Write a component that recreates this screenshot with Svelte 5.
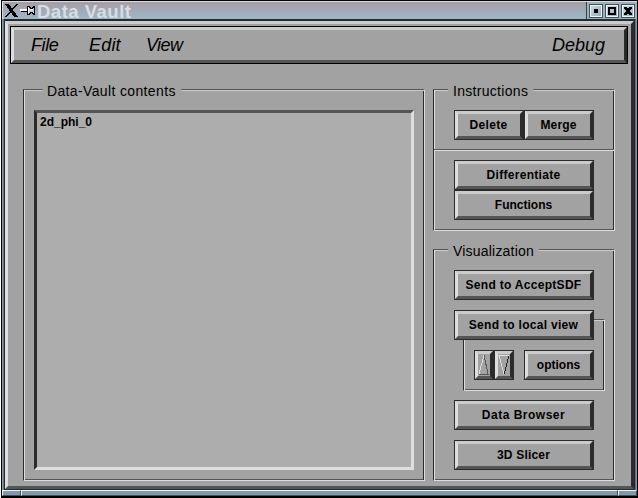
<script>
  const menus = ['File', 'Edit', 'View'];
  const windowButtons = ['iconify', 'maximize', 'close'];
</script>

{#snippet push(label, spacing = 0.3)}
  <button><span class="face" style="letter-spacing: {spacing}px">{label}</span></button>
{/snippet}

<div class="window">
  <header>
    <svg class="logo" width="33" height="15" viewBox="0 0 33 15" shape-rendering="crispEdges">
      <path d="M0 0h4l9 13h-4z" fill="#000" />
      <path d="M12.500 0L0.500 13" stroke="#000" stroke-width="1.3" />
      <path d="M15 5h8v2h-8z" fill="#fff" />
      <path d="M16 7h7v1h-7z" fill="#000" />
      <path d="M22.500 2.500h2l1 2h2l1-2h1v8h-1l-1-2h-2l-1 2h-2z" fill="#ccd3d8" stroke="#000" />
      <path d="M23 3h1v5h-1zM25 5h3v1h-3z" fill="#fff" />
    </svg>
    <h1>Data Vault</h1>
    <div class="controls">
      {#each windowButtons as kind}
        <div class="control">
          <svg width="10" height="10" viewBox="0 0 10 10" shape-rendering="crispEdges">
            {#if kind === 'iconify'}
              <path d="M3 3h4v4h-4z" />
            {:else if kind === 'maximize'}
              <path fill-rule="evenodd" d="M1 1h8v8h-8zM3 3v4h4v-4z" />
            {:else}
              <path d="M1 1h3v1h2v-1h3v2h-1v1h-1v2h1v1h1v2h-3v-1h-2v1h-3v-2h1v-1h1v-2h-1v-1h-1z" />
            {/if}
          </svg>
        </div>
      {/each}
    </div>
  </header>

  <main>
    <nav>
      <div class="menubar">
        {#each menus as menu}
          <span class={menu.toLowerCase()}>{menu}</span>
        {/each}
        <span class="debug">Debug</span>
      </div>
    </nav>

    <div class="columns">
      <section class="group contents">
        <h2>Data-Vault contents</h2>
        <div class="list">2d_phi_0</div>
      </section>

      <div class="side">
        <section class="group instructions">
          <h2>Instructions</h2>
          <div class="pair">
            {@render push('Delete')}
            {@render push('Merge', 0.15)}
          </div>
          <hr />
          <div class="stack">
            {@render push('Differentiate')}
            {@render push('Functions', 0)}
          </div>
        </section>

        <section class="group visualization">
          <h2>Visualization</h2>
          {@render push('Send to AcceptSDF')}
          <div class="local">
            {@render push('Send to local view')}
            <div class="group options">
              <button class="arrow" aria-label="Previous">
                <span class="face">
                  <svg width="12" height="22" viewBox="0 0 12 22" shape-rendering="crispEdges">
                    <path d="M6 1L10 20H1" fill="none" stroke="#555" />
                    <path d="M1 20L6 1" stroke="#ddd" />
                  </svg>
                </span>
              </button>
              <button class="arrow" aria-label="Next">
                <span class="face">
                  <svg width="12" height="22" viewBox="0 0 12 22" shape-rendering="crispEdges">
                    <path d="M11 1.500L6 20.500" stroke="#222" />
                    <path d="M11 1.500H1L6 20" fill="none" stroke="#ddd" />
                  </svg>
                </span>
              </button>
              {@render push('options', 0)}
            </div>
          </div>
          {@render push('Data Browser', 0.5)}
          {@render push('3D Slicer', 0.2)}
        </section>
      </div>
    </div>
  </main>

  <footer><i></i><b></b><i></i></footer>
</div>

<style>
  :global(body) {
    background: #fff;
  }
  * {
    box-sizing: border-box;
  }
  .window {
    width: 637px;
    height: 498px;
    margin-left: 1px;
    border: 1px solid #000;
    border-bottom-width: 2px;
    background: #8299a9;
    color: #000;
    font-family: "Liberation Sans", Arial, sans-serif;
    display: flex;
    flex-direction: column;
    overflow: hidden;
  }
  header {
    height: 18px;
    flex: none;
    border-top: 1px solid #d8dde2;
    border-left: 1px solid #d8dde2;
    background: linear-gradient(#a79da6, #9db7c7);
    display: flex;
  }
  .logo {
    margin: 2px 0 0 2px;
    flex: none;
  }
  h1 {
    margin: 0 0 0 -1px;
    font-size: 18.500px;
    line-height: 20px;
    letter-spacing: 0.500px;
    color: #d9dde1;
    white-space: nowrap;
  }
  .controls {
    margin-left: auto;
    width: 51px;
    border-left: 1px solid #34424a;
    background: #9db1bd;
    display: flex;
    gap: 2px;
    padding: 2px 0 0 2px;
  }
  .control {
    width: 14px;
    height: 14px;
    border: 1px solid #415059;
    box-shadow: inset 1px 1px #edf4f7, inset -1px -1px #edf4f7;
    background: linear-gradient(135deg, #d0dde4, #8fa9b8);
    padding: 1px;
  }
  .control svg {
    display: block;
  }
  main {
    height: 471px;
    flex: none;
    margin: 0 2px;
    border: 1px solid #202c32;
    border-width: 2px 1px 1px;
    background: #a2a2a2;
    box-shadow: -1px 0 #5f7988, 1px 0 #526d7b;
    position: relative;
    padding: 5px 6px 0 5px;
  }
  main::before {
    content: '';
    position: absolute;
    inset: 0;
    border: 3px solid;
    border-color: #cbcbcb #2b2b2b #555 #dedede;
    pointer-events: none;
  }
  nav {
    height: 38px;
    border: 1px solid #000;
  }
  .menubar {
    height: 36px;
    border: 3px solid;
    border-color: #cbcbcb #2b2b2b #555 #dedede;
    display: flex;
    align-items: center;
    font-size: 18px;
    font-style: italic;
    line-height: 28px;
    padding: 0 19px 1px 17px;
  }
  .file {
    width: 58px;
    letter-spacing: -0.400px;
  }
  .edit {
    width: 57px;
    letter-spacing: 0.200px;
  }
  .view {
    letter-spacing: -0.600px;
  }
  .debug {
    margin-left: auto;
  }
  .columns {
    display: flex;
    gap: 8px;
    padding: 25px 12px 0 13px;
  }
  .group {
    border: 1px solid;
    border-color: #555 #dedede #dedede #2b2b2b;
    box-shadow: inset 1px 0 #dedede, inset 0 1px #cbcbcb, inset -1px 0 #2b2b2b, inset 0 -1px #555;
  }
  h2 {
    width: max-content;
    height: 17px;
    margin: -8px 0 0 14px;
    padding: 0 5px;
    background: #a2a2a2;
    font-size: 14px;
    font-weight: 400;
    line-height: 18px;
    letter-spacing: 0.200px;
  }
  .contents {
    width: 402px;
    height: 392px;
  }
  .contents h2 {
    margin-left: 19px;
    padding-left: 4px;
    letter-spacing: 0.360px;
  }
  .instructions h2 {
    letter-spacing: 0.300px;
  }
  .list {
    width: 380px;
    height: 360px;
    margin: 11px 0 0 10px;
    border: 3px solid;
    border-color: #555 #dedede #dedede #2b2b2b;
    background: #adadad;
    padding: 1px 3px;
    font-size: 12px;
    font-weight: 700;
    line-height: 16px;
  }
  .side {
    width: 182px;
  }
  .instructions {
    height: 142px;
  }
  .visualization {
    height: 232px;
    margin-top: 18px;
    display: flex;
    flex-direction: column;
  }
  .pair {
    display: flex;
    padding: 11px 20px 9px;
  }
  .pair button {
    width: 70px;
  }
  hr {
    height: 2px;
    margin: 0;
    border: 1px solid;
    border-color: #555 #dedede #dedede #2b2b2b;
    border-width: 1px 0;
  }
  .stack {
    padding: 9px 20px;
  }
  button {
    display: block;
    width: 140px;
    height: 30px;
    flex: none;
    padding: 0;
    border: 1px solid #2b2b2b;
    border-radius: 0;
    background: #a2a2a2;
    color: #000;
    font: 700 12px/23px "Liberation Sans", Arial, sans-serif;
  }
  .face {
    display: block;
    height: 28px;
    border: 3px solid;
    border-color: #cbcbcb #2b2b2b #555 #dedede;
    padding-right: 1px;
    white-space: nowrap;
  }
  .visualization > button {
    margin: 10px 0 0 20px;
  }
  .visualization > h2 + button {
    margin-top: 11px;
  }
  .local {
    height: 81px;
    margin: 10px 0 -1px 20px;
  }
  .local > button {
    position: relative;
    z-index: 1;
  }
  .options {
    width: 142px;
    height: 72px;
    margin: -21px 0 0 9px;
    padding: 30px 0 0 10px;
    display: flex;
  }
  .arrow {
    width: 20px;
  }
  .arrow + button:last-child {
    width: 70px;
    margin-left: 10px;
  }
  .arrow .face {
    padding: 0;
  }
  .arrow svg {
    display: block;
  }
  footer {
    height: 6px;
    flex: none;
    display: flex;
  }
  footer i,
  footer b {
    border: 1px solid;
    border-color: #edf4f7 #415059 #415059 #edf4f7;
    background: #8299a9;
  }
  footer i {
    width: 19px;
  }
  footer b {
    flex: 1;
  }
</style>
